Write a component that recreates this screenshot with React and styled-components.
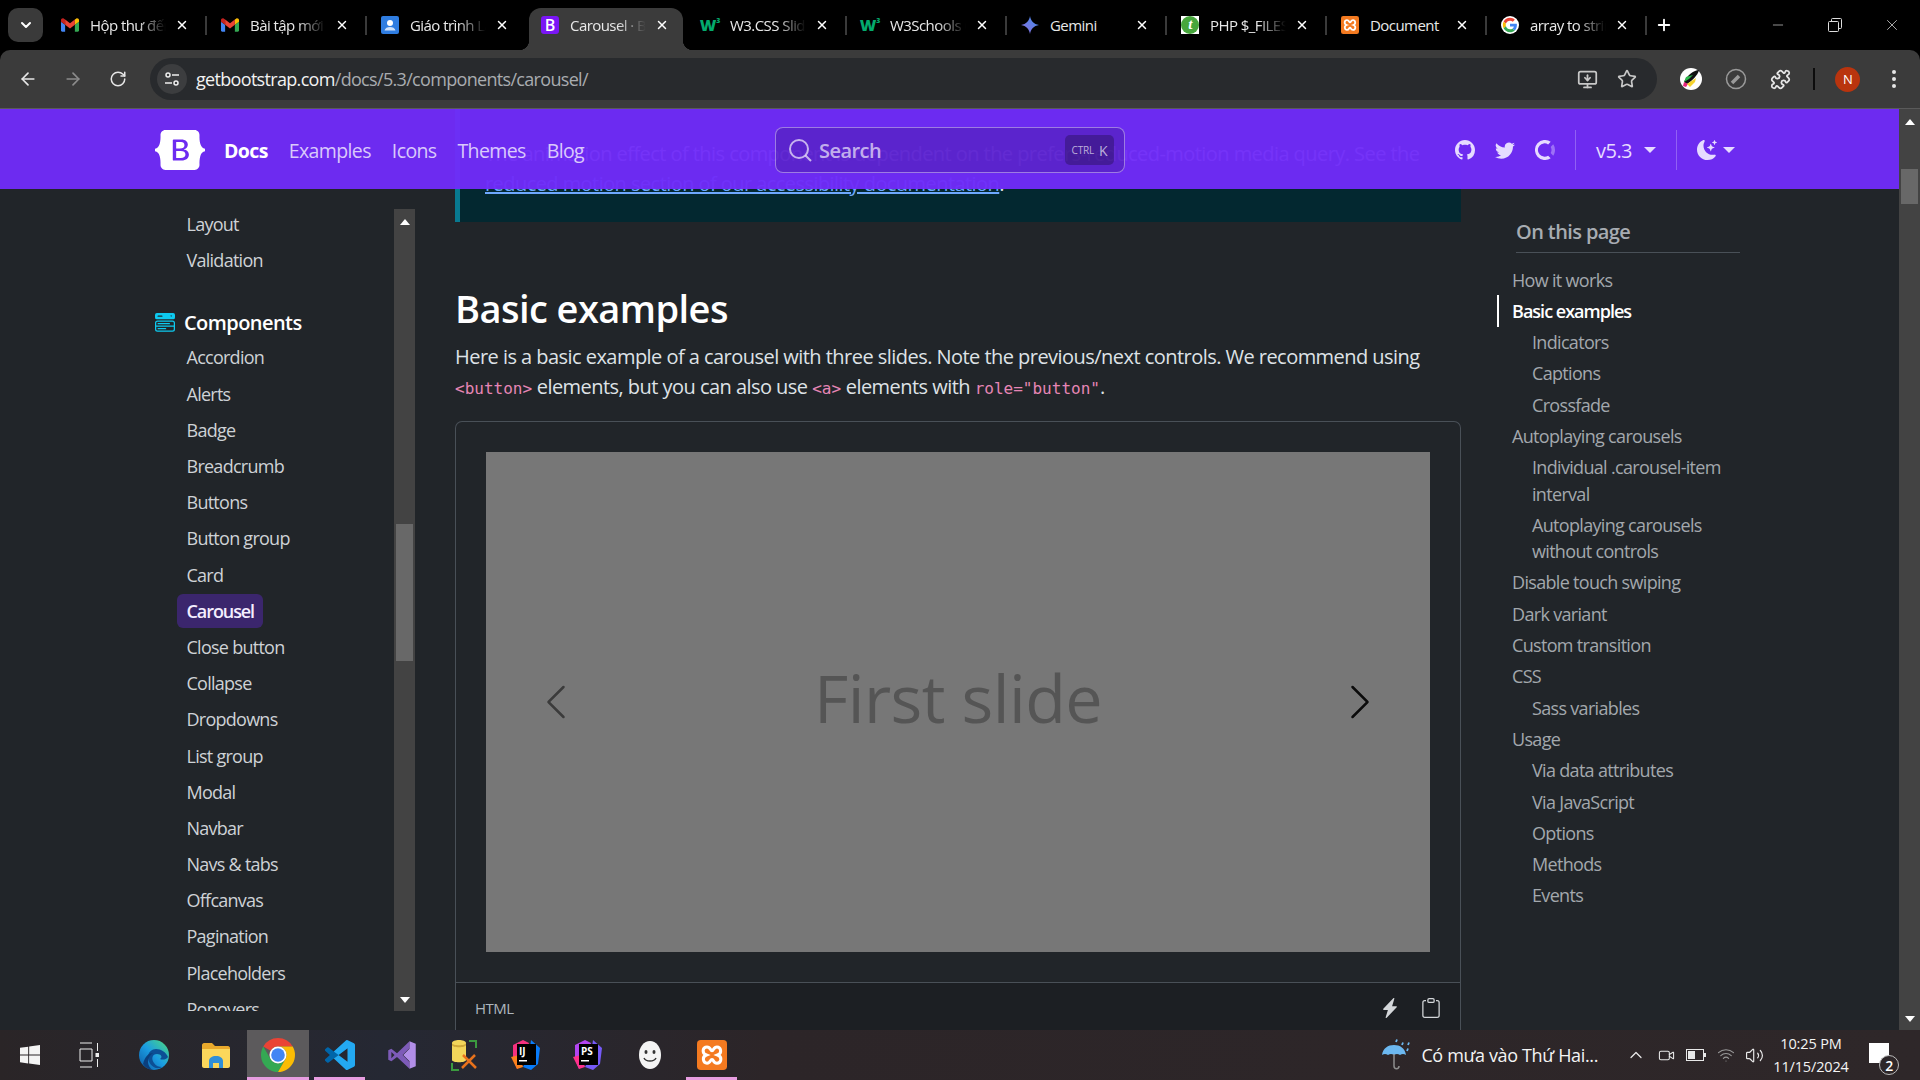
import React from 'react';
import styled, { createGlobalStyle } from 'styled-components';
import { ArrowLeft, ArrowRight, RotateCw, Star, Puzzle, MonitorDown, X, Plus, Minus, ChevronDown, ChevronUp, Wifi, Volume2, Video } from 'lucide-react';
import { BsGithub, BsTwitter, BsMoonStarsFill, BsMenuButtonWideFill, BsLightningChargeFill, BsClipboard, BsWindows } from 'react-icons/bs';

const UI = '"Open Sans", "Noto Sans", "Liberation Sans", sans-serif';
const MONO = '"DejaVu Sans Mono", "Liberation Mono", monospace';

const Global = createGlobalStyle`
  html, body { margin: 0; padding: 0; background: #000; overflow: hidden; }
  * { box-sizing: border-box; }
  body { font-family: ${UI}; }
`;

const Screen = styled.div`
  width: 1920px; height: 1080px; display: flex; flex-direction: column; overflow: hidden; background: #000; letter-spacing: -0.56px;
`;

/* Tab strip */
const TabStrip = styled.div`display: flex; align-items: flex-end; height: 50px; flex: none; padding-left: 8px;`;
const TabMenu = styled.div`
  width: 35px; height: 34px; margin: 0 3px 8px 0; border-radius: 10px; background: #3a3a3a; color: #fff;
  display: flex; align-items: center; justify-content: center;
`;
const Tab = styled.div`
  position: relative; width: ${p => (p.$active ? 154 : 160)}px; height: 42px; margin: 0 ${p => (p.$active ? 3 : 0)}px;
  padding: 0 ${p => (p.$active ? 14 : 17)}px 8px ${p => (p.$active ? 12 : 15)}px; display: flex; align-items: center; color: #e8e8e8;
  font-size: 15px; background: ${p => (p.$active ? '#3b3b3b' : 'transparent')}; border-radius: 12px 12px 0 0;
  ${p => p.$active && `
    &::before, &::after { content: ''; position: absolute; bottom: 0; width: 10px; height: 10px; }
    &::before { left: -10px; background: radial-gradient(circle at 0 0, transparent 10px, #3b3b3b 10.5px); }
    &::after { right: -10px; background: radial-gradient(circle at 100% 0, transparent 10px, #3b3b3b 10.5px); }
  `}
  ${p => p.$sep && `
    &::after { content: ''; position: absolute; right: -1px; top: 8px; width: 2px; height: 19px; background: #3a3a3a; }
  `}
`;
const Fav = styled.div`width: 18px; height: 18px; flex: none; display: flex; align-items: center; justify-content: center;`;
const TabTitle = styled.div`
  flex: 1; margin: 0 6px 0 11px; white-space: nowrap; overflow: hidden;
  mask-image: ${p => (p.$fade ? 'linear-gradient(90deg, #000 60%, transparent 96%)' : 'none')};
`;
const CloseX = styled(X)`flex: none; color: #fff;`;
const LetterFav = styled.div`
  width: 18px; height: 18px; border-radius: 3px; background: #7a16f5; color: #fff; font: 600 16px/18px ${UI}; text-align: center; letter-spacing: 0;
`;
const W3Mark = styled.div`color: #04aa6d; font: 900 16px/18px ${UI}; letter-spacing: 0; white-space: nowrap; & sup { font-size: 7px; line-height: 0; vertical-align: 8px; }`;
const TFav = styled.div`width: 18px; height: 18px; background: #fff; display: flex; align-items: center; justify-content: center;`;
const TCircle = styled.div`width: 18px; height: 18px; border-radius: 50%; background: #47a63c; color: #fff; font: italic 700 15px/17px "Liberation Serif", serif; text-align: center;`;
const NewTab = styled.div`width: 36px; height: 42px; display: flex; align-items: center; justify-content: center; color: #fff; padding-bottom: 8px;`;
const WinControls = styled.div`margin-left: auto; display: flex; align-self: stretch;`;
const WinBtn = styled.div`width: 57px; display: flex; align-items: center; justify-content: center; color: #ddd;`;

/* Toolbar */
const Toolbar = styled.div`
  height: 59px; flex: none; background: #3b3b3b; border-bottom: 1px solid #5a5a5a; border-radius: 10px 10px 0 0; display: flex; align-items: center; padding-left: 5px; color: #e6e6e6;
`;
const ToolBtn = styled.div`
  width: ${p => p.$w || 45}px; margin-left: ${p => p.$ml || 0}px; display: flex; align-items: center; justify-content: center; color: ${p => (p.$dim ? '#8c8c8c' : '#e6e6e6')};
`;
const Omnibox = styled.div`
  flex: none; width: 1507px; height: 42px; margin-left: 10px; border-radius: 21px; background: #282a2d; display: flex; align-items: center; padding: 0 10px 0 7px;
`;
const TuneBtn = styled.div`width: 30px; height: 30px; border-radius: 50%; background: #3c3d3f; display: flex; align-items: center; justify-content: center; color: #eee; flex: none;`;
const Url = styled.div`margin-left: 9px; font-size: 18px; letter-spacing: -0.68px; color: #a9acb0; white-space: nowrap; flex: 1; & b { font-weight: 400; color: #f2f2f2; }`;
const ToolSep = styled.div`width: 2px; height: 22px; background: #0c0c0c; margin: 0 20px 0 11px;`;
const Avatar = styled.div`width: 25px; height: 25px; border-radius: 50%; background: #b9340e; color: #fff; font-size: 13px; display: flex; align-items: center; justify-content: center;`;
const Dots = styled.div`display: flex; flex-direction: column; gap: 3px; margin-left: 32px; & i { width: 4px; height: 4px; border-radius: 50%; background: #e6e6e6; display: block; }`;

/* Viewport */
const Viewport = styled.div`flex: 1; min-height: 0; display: flex; background: #212529;`;
const Page = styled.div`position: relative; flex: 1; min-width: 0; overflow: hidden; display: grid; grid-template-columns: 260px 1006px 239px; column-gap: 40px; padding-left: 155px; align-items: start; color: #dee2e6;`;
const Scroll = styled.div`
  flex: none; width: ${p => p.$w}px; height: ${p => p.$h}; background: #434343; display: flex; flex-direction: column; align-items: center; justify-content: space-between; padding: 10px 0 8px; position: relative;
`;
const ScrollArrow = styled.div`
  width: 0; height: 0; border-left: 5px solid transparent; border-right: 5px solid transparent;
  ${p => (p.$down ? 'border-top: 6px solid #fff;' : 'border-bottom: 6px solid #fff;')}
`;
const ScrollThumb = styled.div`position: absolute; left: 2px; right: 2px; top: ${p => p.$top}px; height: ${p => p.$h}px; background: #686868;`;

/* Nav */
const Nav = styled.header`
  position: absolute; left: 0; right: 0; top: 0; height: 80px; background: rgba(112, 44, 249, 0.96); display: flex; align-items: center; padding: 2px 164px 0 155px; z-index: 2; color: rgba(255,255,255,.85);
`;
const Logo = styled.svg`width: 50px; height: 40px; flex: none; margin-right: 19px; fill: #fff;`;
const NavLinks = styled.nav`flex: 0 0 551px; display: flex; gap: 21px; font-size: 19.5px; letter-spacing: -0.62px;`;
const NavLink = styled.span`font-weight: ${p => (p.$active ? 700 : 400)}; color: ${p => (p.$active ? '#fff' : 'rgba(255,255,255,.75)')};`;
const SearchBox = styled.div`
  flex: 0 0 350px; height: 46px; border: 1px solid rgba(255,255,255,.4); border-radius: 8px; background: rgba(0,0,0,.15); display: flex; align-items: center; padding: 0 10px 0 12px; color: rgba(255,255,255,.65); font-size: 20px; font-weight: 600;
`;
const SearchGlyph = styled.svg`width: 24px; height: 24px; margin-right: 7px; fill: none; stroke: currentColor; stroke-width: 2;`;
const Kbd = styled.div`margin-left: auto; width: 49px; height: 30px; border-radius: 5px; background: rgba(0,0,0,.25); display: flex; align-items: center; justify-content: center; gap: 5px; font-size: 10px; font-weight: 400; letter-spacing: -0.02em; & b { font-size: 14px; font-weight: 400; }`;
const NavRight = styled.div`margin-left: auto; display: flex; align-items: center; color: #e6dbff; font-size: 20px;`;
const NavIcon = styled.div`display: flex; & + & { margin-left: 20px; }`;
const NavDivider = styled.div`width: 1px; height: 40px; background: rgba(255,255,255,.25); margin: 0 20px;`;
const Caret = styled.i`
  width: 0; height: 0; border-left: 6px solid transparent; border-right: 6px solid transparent; border-top: 6px solid currentColor; margin-left: ${p => p.$ml}px;
`;

/* Sidebar */
const Sidebar = styled.aside`margin-top: 100px; height: 802px; display: flex; overflow: hidden;`;
const SideList = styled.div`flex: 1; min-width: 0; margin-top: -3px; display: flex; flex-direction: column; overflow: hidden;`;
const SideItem = styled.div`
  flex: none; height: 36.2px; padding-left: 31.5px; display: flex; align-items: center; font-size: 18px; letter-spacing: -0.74px; color: #ced2d6;
`;
const SidePill = styled.span`
  margin-left: -10px; height: 34px; padding: 0 9px 0 10px; display: flex; align-items: center; border-radius: 6px; background: rgba(112,44,249,.33); color: #f4eeff; font-weight: 600; letter-spacing: -0.06em;
`;
const SideHead = styled.div`flex: none; height: 33px; margin-top: ${p => p.$mt}px; display: flex; align-items: center; gap: 9px; font-size: 20px; font-weight: 600; color: #fff;`;
const CompIcon = styled(BsMenuButtonWideFill)`color: #0dcaf0; flex: none;`;

/* Main */
const Main = styled.main`display: flex; flex-direction: column;`;
const Callout = styled.div`
  height: 113px; border-left: 5px solid #087990; background: #032830; padding: 0 25px 23px 25px; display: flex; flex-direction: column; justify-content: flex-end; font-size: 20px; line-height: 30px; white-space: nowrap;
  & a { color: #6ea8fe; text-decoration: underline; }
`;
const Heading = styled.h2`margin: 62px 0 0; font-size: 38px; line-height: 48px; font-weight: 600; color: #fff;`;
const Lead = styled.p`margin: 10px 0 17px; font-size: 20px; line-height: 30px; letter-spacing: -0.54px; color: #dee2e6; white-space: nowrap;`;
const Code = styled.code`font-family: ${MONO}; font-size: 16px; color: #e685b5; letter-spacing: 0;`;
const Card = styled.section`border: 1px solid #495057; border-radius: 7px 7px 0 0; border-bottom: 0;`;
const CardBody = styled.div`padding: 30px 30px 30px;`;
const Slide = styled.div`
  position: relative; height: 500px; background: #777; color: #555; display: flex; align-items: center; justify-content: center; font-size: 66.5px; font-weight: 400; letter-spacing: -0.56px; padding-bottom: 10px;
`;
const SlideCtl = styled.svg`
  position: absolute; top: 50%; ${p => (p.$next ? 'right: 50px;' : 'left: 50px;')} width: 40px; height: 40px; transform: translateY(-50%); fill: #000; opacity: ${p => (p.$next ? 0.9 : 0.5)};
`;
const CardFoot = styled.div`
  border-top: 1px solid #495057; background: #1c1f23; height: 60px; padding: 15px 19px 0; display: flex; justify-content: space-between; color: #adb5bd; font-size: 15px;
`;
const FootTools = styled.div`display: flex; gap: 21px; color: #d4d7da;`;

/* TOC */
const Toc = styled.aside`margin: 107px 0 0 -4px; display: flex; flex-direction: column;`;
const TocTitle = styled.div`margin-left: 19px; height: 37px; border-bottom: 1px solid #495057; font-size: 20px; font-weight: 600; letter-spacing: -0.6px; color: #a7acb2; line-height: 32px; margin-bottom: 11px;`;
const TocItem = styled.div`
  border-left: 2px solid ${p => (p.$active ? '#fff' : 'transparent')}; padding: 2.5px 0 2.5px ${p => (p.$sub ? 33 : 13)}px; font-size: 18px; line-height: 26.3px; letter-spacing: ${p => (p.$active ? '-0.99px' : '-0.68px')}; color: ${p => (p.$active ? '#fff' : '#a3a8ad')}; font-weight: ${p => (p.$active ? 600 : 400)};
`;

/* Taskbar */
const Taskbar = styled.footer`
  height: 50px; flex: none; display: flex; align-items: stretch; padding-right: 20px; color: #f4f4f4; background: linear-gradient(90deg, #2a2527 0, #252833 20%, #2c2528 40%, #2e2729 100%);
`;
const TaskStart = styled.div`display: flex; margin-left: -1px;`;
const TaskBtn = styled.div`
  position: relative; width: 62px; display: flex; align-items: center; justify-content: center; padding-right: ${p => p.$pr || 0}px; background: ${p => (p.$active ? '#5c5a5c' : 'transparent')};
  ${p => p.$open && `&::after { content: ''; position: absolute; bottom: 0; height: 3px; left: ${p.$active ? 0 : 5}px; right: ${p.$active ? 0 : 6}px; background: #e79de0; }`}
`;
const Tray = styled.div`margin-left: auto; display: flex; align-items: center;`;
const Weather = styled.div`display: flex; align-items: center; gap: 10px; font-size: 18px; margin-right: 23px; letter-spacing: -0.02em;`;
const TrayIcon = styled.div`width: ${p => p.$w || 30}px; display: flex; justify-content: center; color: #e8e8e8;`;
const Clock = styled.div`width: 86px; text-align: center; font-size: 14.5px; line-height: 23px; letter-spacing: -0.01em;`;
const Notif = styled.div`position: relative; width: 40px; margin-left: 6px; height: 40px; display: flex; justify-content: center; padding-right: 2px;`;
const NotifBubble = styled.div`width: 20px; height: 20px; margin-top: 8px; background: #fff;`;
const NotifCount = styled.div`position: absolute; right: 1px; bottom: 0; width: 20px; height: 20px; border-radius: 50%; border: 1px solid #bbb; background: #2e2729; color: #fff; font-size: 14px; font-weight: 600; display: flex; align-items: center; justify-content: center;`;
const SmileFace = styled.svg`width: 24px; height: 30px;`;

const TuneIcon = () => (
  <svg width="16" height="16" viewBox="0 0 16 16" fill="none" stroke="currentColor" strokeWidth="1.5">
    <circle cx="4" cy="4" r="2" />
    <path d="M8 4h7M1 12h7" />
    <circle cx="12" cy="12" r="2" />
  </svg>
);
const GmailIcon = () => (
  <svg width="18" height="14" viewBox="0 0 24 18">
    <path fill="#4285F4" d="M0 16.4C0 17.3.7 18 1.6 18H5.5V8.7L0 4.6z" />
    <path fill="#34A853" d="M18.5 18h3.9c.9 0 1.6-.7 1.6-1.6V4.6L18.5 8.7z" />
    <path fill="#FBBC04" d="M18.5 1.6V8.7L24 4.6V2.5C24 .5 21.7-.7 20.1.5z" />
    <path fill="#EA4335" d="M5.5 8.7V1.6L12 6.5l6.5-4.9v7.1L12 13.5z" />
    <path fill="#C5221F" d="M0 2.5v2.1l5.5 4.1V1.6L3.9.5C2.3-.7 0 .5 0 2.5z" />
  </svg>
);
const ContactIcon = () => (
  <svg width="18" height="18" viewBox="0 0 18 18">
    <rect width="18" height="18" rx="2" fill="#2f7de1" />
    <circle cx="9" cy="7" r="3" fill="#fff" />
    <path fill="#cfe2fb" d="M3.5 14.5c.5-2.5 3-3.5 5.5-3.5s5 1 5.500 3.500z" />
  </svg>
);
const GeminiIcon = () => (
  <svg width="18" height="18" viewBox="0 0 24 24">
    <defs>
      <linearGradient id="gem" x1="0" y1="1" x2="1" y2="0">
        <stop offset="0" stopColor="#8f6ad8" />
        <stop offset="1" stopColor="#3f8ff0" />
      </linearGradient>
    </defs>
    <path fill="url(#gem)" d="M12 0c1 6.500 5 11 12 12-7 1-11 5.500-12 12-1-6.500-5-11-12-12 7-1 11-5.500 12-12z" />
  </svg>
);
const XamppIcon = ({ size = 18 }) => (
  <svg width={size} height={size} viewBox="0 0 24 24">
    <rect width="24" height="24" rx="3" fill="#f47a20" />
    <path fill="none" stroke="#fff" strokeWidth="2.400" d="M8 5.500c3 0 2.500 3 4 3s1-3 4-3 4.500 5 .5 6.500c4 1.500 3 6.500-.5 6.500s-2.500-3-4-3-1 3-4 3-4.500-5-.5-6.500c-4-1.500-3-6.500.5-6.500z" />
  </svg>
);
const GoogleIcon = () => (
  <svg width="20" height="20" viewBox="-6 -6 60 60">
    <circle cx="24" cy="24" r="30" fill="#fff" />
    <path fill="#EA4335" d="M24 9.500c3.540 0 6.710 1.220 9.210 3.600l6.850-6.850C35.900 2.380 30.470 0 24 0 14.620 0 6.510 5.380 2.560 13.220l7.980 6.190C12.430 13.720 17.740 9.500 24 9.500z" />
    <path fill="#4285F4" d="M46.980 24.550c0-1.570-.15-3.090-.38-4.550H24v9.020h12.940c-.58 2.960-2.260 5.480-4.780 7.180l7.730 6c4.510-4.180 7.090-10.360 7.090-17.650z" />
    <path fill="#FBBC05" d="M10.530 28.590c-.48-1.450-.76-2.990-.76-4.590s.27-3.140.76-4.590l-7.980-6.190C.92 16.460 0 20.120 0 24c0 3.880.92 7.540 2.560 10.780l7.970-6.190z" />
    <path fill="#34A853" d="M24 48c6.480 0 11.930-2.130 15.890-5.810l-7.730-6c-2.150 1.450-4.920 2.300-8.160 2.300-6.260 0-11.570-4.220-13.470-9.910l-7.980 6.190C6.510 42.620 14.620 48 24 48z" />
  </svg>
);
const ChromeIcon = () => (
  <svg width="34" height="34" viewBox="4 4 40 40">
    <path fill="#ea4335" d="M24 4A20 20 0 0 1 41.320 14H24A10 10 0 0 0 15.340 19L6.680 14A20 20 0 0 1 24 4z" />
    <path fill="#34a853" d="M6.680 14A20 20 0 0 0 24 44L32.660 29A10 10 0 0 1 15.340 29z" />
    <path fill="#fbbc04" d="M41.320 14H24A10 10 0 0 1 32.660 29L24 44A20 20 0 0 0 41.320 14z" />
    <circle cx="24" cy="24" r="10" fill="#fff" />
    <circle cx="24" cy="24" r="8" fill="#4285f4" />
  </svg>
);
const EdgeIcon = () => (
  <svg width="32" height="32" viewBox="0 0 32 32">
    <defs>
      <linearGradient id="edg" x1="0" y1="1" x2="1" y2="0">
        <stop offset="0" stopColor="#0c59a4" />
        <stop offset=".5" stopColor="#1b9de2" />
        <stop offset="1" stopColor="#4fdc7b" />
      </linearGradient>
    </defs>
    <circle cx="16" cy="16" r="15" fill="url(#edg)" />
    <path fill="#0c4f95" d="M10 18c0-5 4-8 8-8 5 0 10 3 12 8-2 3-6 3-8 2 3-2 1-5-3-5-5 0-6 5-3 9 2 3 5 4 8 4-7 4-14-3-14-10z" />
    <path fill="#0b3f7d" d="M5 25c2-8 6-11 10-11-3 2-5 5-5 9 0 3 2 6 4 8-4-.5-7-3-9-6z" />
  </svg>
);
const FolderIcon = () => (
  <svg width="30" height="28" viewBox="0 0 30 28">
    <path fill="#e9a92c" d="M1 4c0-1 1-2 2-2h8l3 3h13c1 0 2 1 2 2v4H1z" />
    <path fill="#fbd75b" d="M1 8h28v17c0 1-1 2-2 2H3c-1 0-2-1-2-2z" />
    <path fill="#2f8fd8" d="M8 27v-7c0-3 3-5 7-5s7 2 7 5v7h-4v-5h-6v5z" />
  </svg>
);
const VsCodeIcon = () => (
  <svg width="30" height="30" viewBox="0 0 24 24">
    <path fill="#0065a9" d="M1.650 17.940a1 1 0 0 0 1.276.057L18 6.552V.5L7.045 9.130 2.925 6.002a1 1 0 0 0-1.276.057L.327 7.261A1 1 0 0 0 .326 8.740L3.899 12 .326 15.260a1 1 0 0 0 .001 1.479z" />
    <path fill="#23a9f2" d="M23.150 2.587L18.210.21a1.494 1.494 0 0 0-1.705.29L7.045 9.130 10.826 12l7.178-5.448v10.896L10.826 12l-3.781 2.870 9.460 8.630a1.492 1.492 0 0 0 1.704.29l4.942-2.377A1.500 1.500 0 0 0 24 20.060V3.939a1.500 1.500 0 0 0-.85-1.352z" />
  </svg>
);
const VsIcon = () => (
  <svg width="30" height="30" viewBox="0 0 24 24">
    <path fill="#7d5bb8" fillRule="evenodd" d="M18 1L8 10.500 3.500 7 1 8.200v7.600L3.500 17 8 13.500 18 23l0-5.500L12.500 12 18 6.500zM3.500 9.500L6 12l-2.500 2.500z" />
    <path fill="#b18ee8" d="M18 1l5 2v18l-5 2V17L13 12l5-5z" />
  </svg>
);
const SqlIcon = () => (
  <svg width="30" height="32" viewBox="0 0 30 32">
    <path fill="none" stroke="#3b9a3f" strokeWidth="2" d="M20 2h7v7M3 24v7h7" />
    <path fill="#f2d65a" d="M3 4c0-4 14-4 14 0v17c0 3-14 3-14 0z" />
    <path fill="#cfa93a" d="M3 4c0 3 14 3 14 0v2c0 3-14 3-14 0z" />
    <path fill="none" stroke="#e8721c" strokeWidth="2.500" d="M13 29l13-13M14 16l13 13" />
  </svg>
);
const JbText = styled.text`font: 700 10px ${UI}; fill: #fff; letter-spacing: 0;`;
const JetBrainsIcon = ({ label, c1, c2, c3 }) => (
  <svg width="30" height="32" viewBox="0 0 30 32">
    <path fill={c1} d="M2 6l10-5 6 3-4 14-8 12-4-10z" />
    <path fill={c2} d="M20 1l9 8-2 16-7 6-8-3 6-12z" />
    <path fill={c3} d="M0 18l6 12 6-2-4-12z" />
    <rect x="6" y="5" width="19" height="21" fill="#000" />
    <JbText x="8" y="16">{label}</JbText>
    <rect x="8" y="21" width="8" height="1.500" fill="#fff" />
  </svg>
);
const WheelIcon = () => (
  <svg width="22" height="22" viewBox="0 0 22 22">
    <circle cx="11" cy="11" r="11" fill="#fff" />
    <path fill="#111" d="M19 2c-5 0-12 5-15 12l3 2c5-3 11-9 12-14z" />
    <path fill="#e7247b" d="M4 14l-1 4 3 1 2-3z" />
    <path fill="#2db84c" d="M6 9l-2 5 5-3 4-4z" />
    <path fill="#f6d32d" d="M7 16l3 3 5-5 1-4z" />
  </svg>
);
const CompassIcon = () => (
  <svg width="22" height="22" viewBox="0 0 22 22" fill="none" stroke="#9a9a9a" strokeWidth="1.500">
    <circle cx="11" cy="11" r="9.500" />
    <path d="M7 15l7-7" strokeWidth="3.500" />
  </svg>
);
const OpenCollective = () => (
  <svg width="20" height="20" viewBox="0 0 32 32" fill="currentColor">
    <path fillOpacity=".4" d="M32 16c0 3.370-1.040 6.500-2.830 9.080l-4.110-4.110a10.800 10.800 0 0 0 1.430-4.970c0-1.800-.53-3.480-1.430-4.970l4.110-4.110A16 16 0 0 1 32 16z" />
    <path fillRule="evenodd" d="M25.100 2.900l-4.100 4.100A10.670 10.670 0 1 0 21 25l4.100 4.100A16 16 0 1 1 25.100 2.900z" />
  </svg>
);
const RestoreIcon = () => (
  <svg width="14" height="14" viewBox="0 0 14 14" fill="none" stroke="currentColor">
    <rect x=".5" y="3.500" width="10" height="10" rx="1" />
    <path d="M3.500 3.500V1.500a1 1 0 0 1 1-1h8a1 1 0 0 1 1 1v8a1 1 0 0 1-1 1h-2" />
  </svg>
);
const TaskViewIcon = () => (
  <svg width="20" height="28" viewBox="0 0 20 28" fill="none" stroke="#eee">
    <path d="M1 2h12M1 26h12M1 8h12v12H1zM18.500 2v8M18.500 18v8" />
    <rect x="16.500" y="12" width="4" height="4" fill="#eee" stroke="none" />
  </svg>
);
const UmbrellaIcon = () => (
  <svg width="30" height="34" viewBox="0 0 30 34">
    <path fill="#6cb8f0" d="M1 17C2 10 7 7 13 7s11 3 12 10c-2-1.500-4-1.500-6 0-2-1.500-4-1.500-6 0-2-1.500-4-1.500-6 0-2-1.500-4-1.500-6 0z" />
    <path fill="none" stroke="#8d8d8d" strokeWidth="1.500" d="M13 16v12c0 3.500 5 3.500 5 0" />
    <path fill="none" stroke="#6cb8f0" strokeWidth="1.800" d="M15 4l1-2.500M21 7l1-2.500M27 7l1-2.500M26 13l1-2.500" />
  </svg>
);
const BatteryIcon = () => (
  <svg width="20" height="12" viewBox="0 0 20 12" fill="none" stroke="currentColor">
    <rect x=".5" y=".5" width="17" height="11" />
    <rect x="2" y="2" width="7" height="8" fill="currentColor" stroke="none" />
    <path d="M19 4v4" strokeWidth="2" />
  </svg>
);

const tabs = [
  { icon: <GmailIcon />, title: 'Hộp thư đến', fade: true },
  { icon: <GmailIcon />, title: 'Bài tập mới', fade: true },
  { icon: <ContactIcon />, title: 'Giáo trình Lập', fade: true, nosep: true },
  { icon: <LetterFav>B</LetterFav>, title: 'Carousel · Bootstrap', fade: true, active: true },
  { icon: <W3Mark>W<sup>3</sup></W3Mark>, title: 'W3.CSS Slideshow', fade: true },
  { icon: <W3Mark>W<sup>3</sup></W3Mark>, title: 'W3Schools Online', fade: true },
  { icon: <GeminiIcon />, title: 'Gemini' },
  { icon: <TFav><TCircle>t</TCircle></TFav>, title: 'PHP $_FILES', fade: true },
  { icon: <XamppIcon />, title: 'Document' },
  { icon: <GoogleIcon />, title: 'array to string', fade: true },
];

const sideItems = ['Accordion', 'Alerts', 'Badge', 'Breadcrumb', 'Buttons', 'Button group', 'Card', 'Carousel', 'Close button', 'Collapse', 'Dropdowns', 'List group', 'Modal', 'Navbar', 'Navs & tabs', 'Offcanvas', 'Pagination', 'Placeholders', 'Popovers'];

const tocItems = [
  ['How it works'], ['Basic examples', 0, 1], ['Indicators', 1], ['Captions', 1], ['Crossfade', 1],
  ['Autoplaying carousels'], ['Individual .carousel-item interval', 1], ['Autoplaying carousels without controls', 1],
  ['Disable touch swiping'], ['Dark variant'], ['Custom transition'], ['CSS'], ['Sass variables', 1],
  ['Usage'], ['Via data attributes', 1], ['Via JavaScript', 1], ['Options', 1], ['Methods', 1], ['Events', 1],
];

export default function App() {
  return (
    <Screen>
      <Global />
      <TabStrip>
        <TabMenu><ChevronDown size={16} strokeWidth={3} /></TabMenu>
        {tabs.map(t => (
          <Tab key={t.title} $active={t.active} $sep={!t.active && !t.nosep}>
            <Fav>{t.icon}</Fav>
            <TabTitle $fade={t.fade}>{t.title}</TabTitle>
            <CloseX size={14} strokeWidth={2.5} />
          </Tab>
        ))}
        <NewTab><Plus size={18} strokeWidth={2.5} /></NewTab>
        <WinControls>
          <WinBtn><Minus size={16} strokeWidth={1} /></WinBtn>
          <WinBtn><RestoreIcon /></WinBtn>
          <WinBtn><X size={18} strokeWidth={1} /></WinBtn>
        </WinControls>
      </TabStrip>

      <Toolbar>
        <ToolBtn><ArrowLeft size={20} strokeWidth={2} /></ToolBtn>
        <ToolBtn $dim><ArrowRight size={20} strokeWidth={2} /></ToolBtn>
        <ToolBtn><RotateCw size={18} strokeWidth={2} /></ToolBtn>
        <Omnibox>
          <TuneBtn><TuneIcon /></TuneBtn>
          <Url><b>getbootstrap.com</b>/docs/5.3/components/carousel/</Url>
          <ToolBtn $w={40}><MonitorDown size={21} color="#c8c8c8" /></ToolBtn>
          <ToolBtn $w={40}><Star size={20} color="#c8c8c8" /></ToolBtn>
        </Omnibox>
        <ToolBtn $w={44} $ml={12}><WheelIcon /></ToolBtn>
        <ToolBtn $w={45}><CompassIcon /></ToolBtn>
        <ToolBtn $w={44}><Puzzle size={21} /></ToolBtn>
        <ToolSep />
        <Avatar>N</Avatar>
        <Dots><i /><i /><i /></Dots>
      </Toolbar>

      <Viewport>
        <Page>
          <Nav>
            <Logo viewBox="0 0 118 94">
              <path fillRule="evenodd" d="M24.509 0c-6.733 0-11.715 5.893-11.492 12.284.214 6.140-.064 14.092-2.066 20.577C8.943 39.365 5.547 43.485 0 44.014v5.972c5.547.529 8.943 4.649 10.951 11.153 2.002 6.485 2.280 14.437 2.066 20.577C12.794 88.106 17.776 94 24.510 94H93.500c6.733 0 11.714-5.893 11.491-12.284-.214-6.140.064-14.092 2.066-20.577 2.009-6.504 5.396-10.624 10.943-11.153v-5.972c-5.547-.529-8.934-4.649-10.943-11.153-2.002-6.484-2.280-14.437-2.066-20.577C105.214 5.894 100.233 0 93.500 0H24.508zM80 57.863C80 66.663 73.436 72 62.543 72H44a2 2 0 01-2-2V24a2 2 0 012-2h18.437c9.083 0 15.044 4.920 15.044 12.474 0 5.302-4.010 10.049-9.119 10.880v.277C75.317 46.394 80 51.210 80 57.863zM60.521 28.340H49.948v14.934h8.905c6.884 0 10.680-2.772 10.680-7.727 0-4.643-3.264-7.207-8.012-7.207zM49.948 49.200v16.458H60.910c7.167 0 10.964-2.876 10.964-8.281 0-5.406-3.903-8.178-11.425-8.178H49.948z" />
            </Logo>
            <NavLinks>
              <NavLink $active>Docs</NavLink>
              <NavLink>Examples</NavLink>
              <NavLink>Icons</NavLink>
              <NavLink>Themes</NavLink>
              <NavLink>Blog</NavLink>
            </NavLinks>
            <SearchBox>
              <SearchGlyph viewBox="0 0 24 24"><circle cx="11" cy="11" r="9" /><path d="M17.500 17.500L23 23" /></SearchGlyph>
              Search
              <Kbd>CTRL <b>K</b></Kbd>
            </SearchBox>
            <NavRight>
              <NavIcon><BsGithub size={20} /></NavIcon>
              <NavIcon><BsTwitter size={20} /></NavIcon>
              <NavIcon><OpenCollective /></NavIcon>
              <NavDivider />
              <span>v5.3</span>
              <Caret $ml={12} />
              <NavDivider />
              <BsMoonStarsFill size={20} />
              <Caret $ml={6} />
            </NavRight>
          </Nav>

          <Sidebar>
            <SideList>
              <SideItem>Layout</SideItem>
              <SideItem>Validation</SideItem>
              <SideHead $mt={28}><CompIcon size={20} />Components</SideHead>
              {sideItems.map(s => (
                <SideItem key={s}>{s === 'Carousel' ? <SidePill>{s}</SidePill> : s}</SideItem>
              ))}
            </SideList>
            <Scroll $w={21} $h="100%">
              <ScrollArrow />
              <ScrollThumb $top={315} $h={137} />
              <ScrollArrow $down />
            </Scroll>
          </Sidebar>

          <Main>
            <Callout>
              <div>The animation effect of this component is dependent on the prefers-reduced-motion media query. See the</div>
              <div><a>reduced motion section of our accessibility documentation</a>.</div>
            </Callout>
            <Heading>Basic examples</Heading>
            <Lead>
              Here is a basic example of a carousel with three slides. Note the previous/next controls. We recommend using<br />
              <Code>&lt;button&gt;</Code> elements, but you can also use <Code>&lt;a&gt;</Code> elements with <Code>role="button"</Code>.
            </Lead>
            <Card>
              <CardBody>
                <Slide>
                  First slide
                  <SlideCtl viewBox="0 0 16 16"><path d="M11.354 1.646a.5.5 0 0 1 0 .708L5.707 8l5.647 5.646a.5.5 0 0 1-.708.708l-6-6a.5.5 0 0 1 0-.708l6-6a.5.5 0 0 1 .708 0z" /></SlideCtl>
                  <SlideCtl $next viewBox="0 0 16 16"><path d="M4.646 1.646a.5.5 0 0 1 .708 0l6 6a.5.5 0 0 1 0 .708l-6 6a.5.5 0 0 1-.708-.708L10.293 8 4.646 2.354a.5.5 0 0 1 0-.708z" /></SlideCtl>
                </Slide>
              </CardBody>
              <CardFoot>
                HTML
                <FootTools><BsLightningChargeFill size={20} /><BsClipboard size={20} /></FootTools>
              </CardFoot>
            </Card>
          </Main>

          <Toc>
            <TocTitle>On this page</TocTitle>
            {tocItems.map(([label, sub, active]) => (
              <TocItem key={label} $sub={sub} $active={active}>{label}</TocItem>
            ))}
          </Toc>
        </Page>
        <Scroll $w={21} $h="100%">
          <ScrollArrow />
          <ScrollThumb $top={60} $h={35} />
          <ScrollArrow $down />
        </Scroll>
      </Viewport>

      <Taskbar>
        <TaskStart>
          <TaskBtn><BsWindows size={20} /></TaskBtn>
          <TaskBtn $pr={6}><TaskViewIcon /></TaskBtn>
          <TaskBtn><EdgeIcon /></TaskBtn>
          <TaskBtn><FolderIcon /></TaskBtn>
          <TaskBtn $active $open><ChromeIcon /></TaskBtn>
          <TaskBtn $open><VsCodeIcon /></TaskBtn>
          <TaskBtn><VsIcon /></TaskBtn>
          <TaskBtn><SqlIcon /></TaskBtn>
          <TaskBtn><JetBrainsIcon label="IJ" c1="#f5317f" c2="#087cfa" c3="#fc801d" /></TaskBtn>
          <TaskBtn><JetBrainsIcon label="PS" c1="#b345f1" c2="#765af8" c3="#ff318c" /></TaskBtn>
          <TaskBtn>
            <SmileFace viewBox="0 0 24 30">
              <ellipse cx="12" cy="15" rx="11" ry="14" fill="#f4f4f4" />
              <ellipse cx="8" cy="12" rx="1.500" ry="2" fill="#333" />
              <ellipse cx="16" cy="12" rx="1.500" ry="2" fill="#333" />
              <path d="M6 18c2 4 10 4 12 0" fill="none" stroke="#333" strokeWidth="1.500" />
            </SmileFace>
          </TaskBtn>
          <TaskBtn $open><XamppIcon size={30} /></TaskBtn>
        </TaskStart>
        <Tray>
          <Weather><UmbrellaIcon />Có mưa vào Thứ Hai...</Weather>
          <TrayIcon><ChevronUp size={20} strokeWidth={1.5} /></TrayIcon>
          <TrayIcon><Video size={17} strokeWidth={1.5} /></TrayIcon>
          <TrayIcon><BatteryIcon /></TrayIcon>
          <TrayIcon><Wifi size={18} strokeWidth={1.5} color="#999" /></TrayIcon>
          <TrayIcon $w={27}><Volume2 size={19} strokeWidth={1.5} /></TrayIcon>
          <Clock>10:25 PM<br />11/15/2024</Clock>
          <Notif>
            <NotifBubble />
            <NotifCount>2</NotifCount>
          </Notif>
        </Tray>
      </Taskbar>
    </Screen>
  );
}
